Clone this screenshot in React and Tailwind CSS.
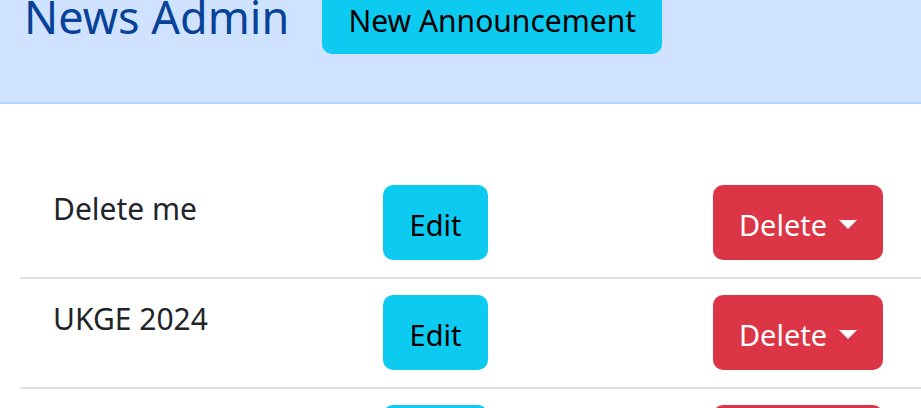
const items = ["Delete me", "UKGE 2024", "Quarterly Update"];

function Caret() {
  return (
    <svg width="18" height="9" viewBox="0 0 18 9" className="ml-3 shrink-0">
      <path d="M0 0h18L9 9z" fill="white" />
    </svg>
  );
}

function NewsRow({ title }) {
  return (
    <div className="grid grid-cols-[330px_330px_330px] border-b-2 border-[#dee2e6] pl-[33px] pt-4 pb-[17px]">
      <div className="pt-[3px] text-[30px] leading-[42px] text-[#212529]">{title}</div>
      <div>
        <button className="flex h-[75px] w-[105px] items-center justify-center rounded-[10px] bg-[#0dcaf0] pt-1 text-[29px] text-black">
          Edit
        </button>
      </div>
      <div>
        <button className="flex h-[75px] w-[170px] items-center justify-center rounded-[10px] bg-[#dc3545] pt-1 text-[29px] text-white">
          Delete
          <Caret />
        </button>
      </div>
    </div>
  );
}

export default function App() {
  return (
    <div className="h-[408px] w-[921px] overflow-hidden bg-white font-['Noto_Sans',sans-serif]">
      <header className="h-[104px] overflow-hidden border-b-2 border-[#b6d4fe] bg-[#cfe2ff]">
        <div className="-mt-[21px] flex items-start pl-6">
          <h1 className="mt-[10px] text-[45px] leading-[56px] text-[#084298]">News Admin</h1>
          <button className="ml-[33px] h-[75px] w-[340px] rounded-[10px] bg-[#0dcaf0] pt-[8px] text-[30px] text-black">
            New Announcement
          </button>
        </div>
      </header>
      <div className="ml-5 mt-[65px] w-[1060px]">
        {items.map((t) => (
          <NewsRow key={t} title={t} />
        ))}
      </div>
    </div>
  );
}
